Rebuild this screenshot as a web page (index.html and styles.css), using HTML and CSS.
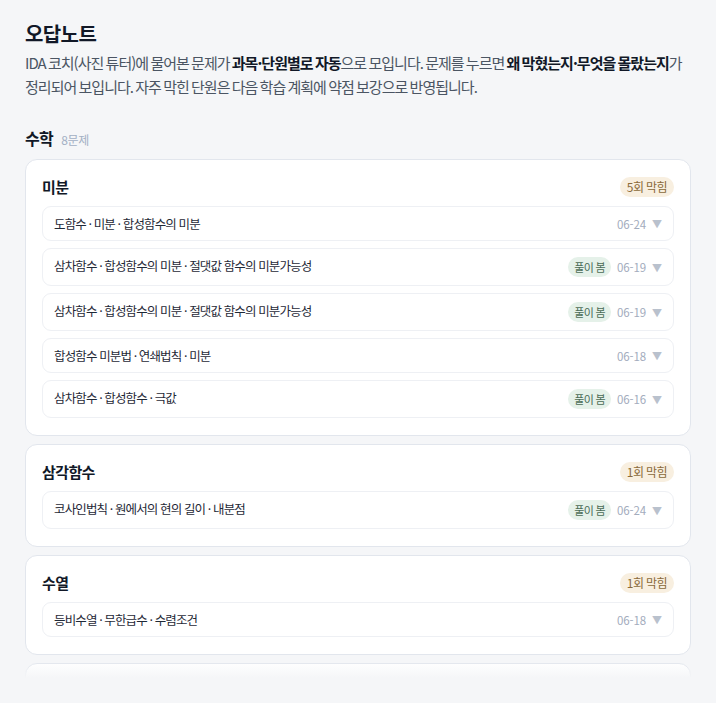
FILE: index.html
```html
<!DOCTYPE html>
<html lang="ko">
<head>
    <meta charset="UTF-8">
    <meta name="viewport" content="width=device-width, initial-scale=1.0">
    <title>오답노트</title>
    <link rel="stylesheet" href="styles.css">
</head>
<body>
    <div class="page">
        <h1 class="title">오답노트</h1>
        <p class="desc">IDA 코치(사진 튜터)에 물어본 문제가 <b>과목·단원별로 자동</b>으로 모입니다. 문제를 누르면 <b>왜 막혔는지·무엇을 몰랐는지</b>가 정리되어 보입니다. 자주 막힌 단원은 다음 학습 계획에 약점 보강으로 반영됩니다.</p>

        <div class="subject">
            <h2>수학</h2>
            <span class="count">8문제</span>
        </div>

        <div class="list">
            <div class="card">
                <div class="card-head">
                    <h3>미분</h3>
                    <span class="stuck">5회 막힘</span>
                </div>
                <div class="row">
                    <span class="topic">도함수 · 미분 · 합성함수의 미분</span>
                    <span class="meta"><span class="date">06-24</span><span class="arrow">▼</span></span>
                </div>
                <div class="row">
                    <span class="topic">삼차함수 · 합성함수의 미분 · 절댓값 함수의 미분가능성</span>
                    <span class="meta"><span class="solved">풀이 봄</span><span class="date">06-19</span><span class="arrow">▼</span></span>
                </div>
                <div class="row">
                    <span class="topic">삼차함수 · 합성함수의 미분 · 절댓값 함수의 미분가능성</span>
                    <span class="meta"><span class="solved">풀이 봄</span><span class="date">06-19</span><span class="arrow">▼</span></span>
                </div>
                <div class="row">
                    <span class="topic">합성함수 미분법 · 연쇄법칙 · 미분</span>
                    <span class="meta"><span class="date">06-18</span><span class="arrow">▼</span></span>
                </div>
                <div class="row">
                    <span class="topic">삼차함수 · 합성함수 · 극값</span>
                    <span class="meta"><span class="solved">풀이 봄</span><span class="date">06-16</span><span class="arrow">▼</span></span>
                </div>
            </div>

            <div class="card">
                <div class="card-head">
                    <h3>삼각함수</h3>
                    <span class="stuck">1회 막힘</span>
                </div>
                <div class="row">
                    <span class="topic">코사인법칙 · 원에서의 현의 길이 · 내분점</span>
                    <span class="meta"><span class="solved">풀이 봄</span><span class="date">06-24</span><span class="arrow">▼</span></span>
                </div>
            </div>

            <div class="card">
                <div class="card-head">
                    <h3>수열</h3>
                    <span class="stuck">1회 막힘</span>
                </div>
                <div class="row">
                    <span class="topic">등비수열 · 무한급수 · 수렴조건</span>
                    <span class="meta"><span class="date">06-18</span><span class="arrow">▼</span></span>
                </div>
            </div>

            <div class="card">
                <div class="card-head">
                    <h3>함수의 극한</h3>
                    <span class="stuck">1회 막힘</span>
                </div>
            </div>
        </div>
    </div>
</body>
</html>
```

FILE: styles.css
```css
* {
    margin: 0;
    padding: 0;
    box-sizing: border-box;
}

body {
    font-family: 'Noto Sans CJK KR', 'Noto Sans', sans-serif;
    background-color: #f5f6f8;
    color: #111827;
    height: 100vh;
    overflow: hidden;
}

.page {
    padding: 20px 25px 0;
}

.title {
    font-size: 20px;
    font-weight: 700;
    line-height: 28px;
    letter-spacing: -0.03em;
}

.desc {
    margin-top: 3px;
    font-size: 15px;
    line-height: 24px;
    color: #4b5563;
    letter-spacing: -0.065em;
    word-spacing: -1px;
    word-break: keep-all;
}

.desc b {
    color: #111827;
    font-weight: 700;
}

/* subject heading */
.subject {
    display: flex;
    align-items: baseline;
    gap: 8px;
    margin-top: 27px;
}

.subject h2 {
    font-size: 16px;
    font-weight: 700;
    line-height: 24px;
    letter-spacing: -0.04em;
}

.subject .count {
    font-size: 12px;
    color: #a3b0c4;
    letter-spacing: -0.03em;
}

/* cards */
.list {
    position: relative;
    display: flex;
    flex-direction: column;
    gap: 8px;
    margin-top: 9px;
    height: 519px;
    overflow: hidden;
}

/* bottom fade of the scroll area */
.list::after {
    content: '';
    position: absolute;
    left: 0;
    right: 0;
    bottom: 0;
    height: 16px;
    background: linear-gradient(to bottom, rgba(245, 246, 248, 0), #f5f6f8);
}

.card {
    flex-shrink: 0;
    background: #ffffff;
    border: 1px solid #e2e6ed;
    border-radius: 12px;
    padding: 16px 16px 17px;
    display: flex;
    flex-direction: column;
    gap: 7px;
}

.card-head {
    display: flex;
    justify-content: space-between;
    align-items: center;
    margin-bottom: 2px;
}

.card-head h3 {
    font-size: 15px;
    font-weight: 700;
    letter-spacing: -0.04em;
}

.stuck {
    background: #f8efe0;
    color: #8a6a3a;
    font-size: 12px;
    line-height: 20px;
    padding: 0 7px;
    border-radius: 10px;
    letter-spacing: -0.05em;
}

.row {
    display: flex;
    justify-content: space-between;
    align-items: flex-start;
    border: 1px solid #eef0f4;
    border-radius: 9px;
    padding: 8px 11px;
}

.topic {
    font-size: 12.5px;
    line-height: 17px;
    color: #1f2937;
    letter-spacing: -0.07em;
}

.meta {
    display: flex;
    align-items: center;
    gap: 6px;
    min-height: 17px;
}

.solved {
    background: #e5f1e9;
    color: #4a6b55;
    font-size: 11px;
    line-height: 20px;
    padding: 0 6px;
    border-radius: 10px;
    letter-spacing: -0.06em;
}

.date {
    font-size: 11.5px;
    color: #a3acbd;
    letter-spacing: -0.01em;
}

.arrow {
    font-size: 10px;
    color: #b9c1cd;
}
```
